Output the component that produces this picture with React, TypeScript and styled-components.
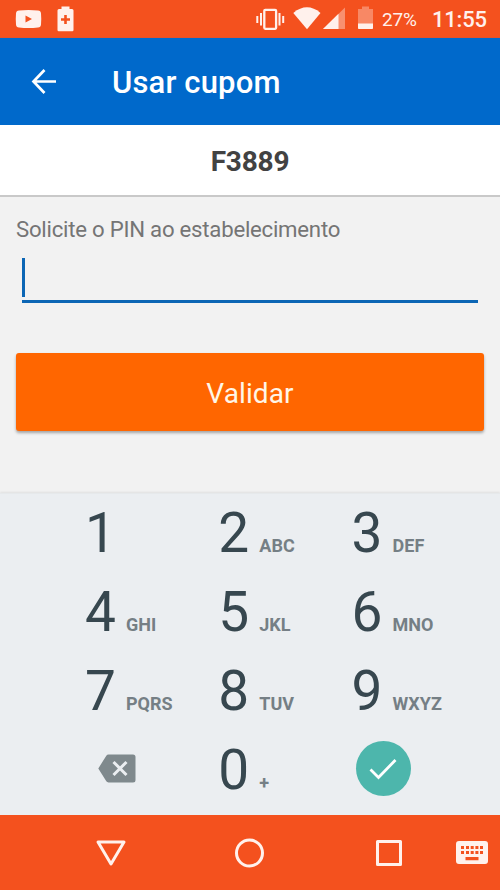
import React from "react";
import styled, { createGlobalStyle } from "styled-components";

const GlobalStyle = createGlobalStyle`
  *, *::before, *::after { box-sizing: border-box; }
  body { margin: 0; font-family: Roboto, "Liberation Sans", sans-serif; background: #f2f2f2; }
  button { border: 0; padding: 0; font: inherit; background: none; }
  svg { display: block; flex: none; }
`;

const Screen = styled.div`
  display: flex;
  flex-direction: column;
  width: 500px;
  height: 890px;
  overflow: hidden;
  background: #f2f2f2;
`;

const StatusBar = styled.header`
  display: flex;
  height: 38px;
  flex: none;
  background: #f4511e;
  border-bottom: 1px solid #e2532c;
`;

const StatusText = styled.span<{ $size: number; $weight: number; $width: number; $gap: number }>`
  width: ${(p) => p.$width}px;
  margin-left: ${(p) => p.$gap}px;
  font-size: ${(p) => p.$size}px;
  font-weight: ${(p) => p.$weight};
  line-height: 40px;
  letter-spacing: -0.2px;
  white-space: nowrap;
  color: #fff1ec;
`;

const AppBar = styled.div`
  display: flex;
  align-items: center;
  height: 87px;
  flex: none;
  padding-left: 31px;
  background: #0069cb;
`;

const BackButton = styled.button`
  width: 81px;
`;

const Title = styled.h1`
  margin: 2px 0 0;
  font-size: 31px;
  font-weight: 500;
  line-height: 40px;
  letter-spacing: 0.15px;
  color: #fff;
`;

const CouponCode = styled.div`
  height: 72px;
  flex: none;
  background: #fff;
  border-bottom: 2px solid #c9c9c9;
  color: #424242;
  font-size: 28px;
  font-weight: 700;
  line-height: 73px;
  letter-spacing: -0.2px;
  text-align: center;
`;

const Form = styled.main`
  display: flex;
  flex-direction: column;
  height: 296px;
  flex: none;
  padding: 17px 16px 0;
`;

const Label = styled.label`
  font-size: 22.2px;
  line-height: 30px;
  letter-spacing: -0.24px;
  color: #757575;
  white-space: nowrap;
`;

const PinField = styled.div`
  height: 45px;
  margin: 14px 6px 0;
  border-bottom: 3px solid #0c66b5;
`;

const Caret = styled.div`
  width: 3px;
  height: 39px;
  background: #0c66b5;
`;

const SubmitButton = styled.button`
  height: 78px;
  margin-top: 50px;
  padding-top: 3px;
  border-radius: 3px;
  background: #ff6600;
  color: #fff6e8;
  font-size: 28px;
  letter-spacing: 0.1px;
  box-shadow: 0 2px 3px rgba(0, 0, 0, 0.32);
`;

const Keypad = styled.section`
  display: grid;
  grid-template-columns: repeat(3, 133.3px);
  grid-template-rows: repeat(4, 79.1px);
  height: 322px;
  flex: none;
  padding-left: 85px;
  background: #ebeef1;
  border-top: 1px solid #e6e9eb;
  box-shadow: 0 -1px 2px rgba(0, 0, 0, 0.08);
`;

const Key = styled.button`
  display: flex;
  align-items: baseline;
  text-align: left;
  line-height: 79px;
`;

const IconKey = styled.button<{ $inset: number }>`
  display: flex;
  align-items: center;
  padding-left: ${(p) => p.$inset}px;
  padding-bottom: 4px;
`;

const Digit = styled.span`
  width: 41px;
  font-size: 55px;
  color: #37474f;
`;

const Letters = styled.span`
  font-size: 18px;
  font-weight: 700;
  color: #757f85;
`;

const Confirm = styled.span`
  display: grid;
  place-items: center;
  width: 55px;
  height: 55px;
  border-radius: 50%;
  background: #4db6ac;
`;

const NavBar = styled.nav`
  height: 75px;
  flex: none;
  background: #f4511e;
`;

const StatusIcons = () => (
  <svg width="375" height="37" viewBox="0 0 375 37" fill="#fff1ec">
    <path
      fillRule="evenodd"
      d="M19 10.400q9.500-1 19 0q2.800.2 3 3q.5 5.500 0 11q-.2 2.800-3 3q-9.500 1-19 0q-2.800-.2-3-3q-.5-5.500 0-11q.2-2.800 3-3zM25.500 15.500v7l6.500-3.500z"
    />
    <path
      fillRule="evenodd"
      d="M61.500 6.500h8v2.500h2.500a1.500 1.500 0 0 1 1.500 1.500v19.500a1.200 1.200 0 0 1-1.200 1.200H58.700a1.200 1.200 0 0 1-1.200-1.200V10.500a1.500 1.500 0 0 1 1.500-1.500h2.500zM64.200 15v3.200H61v2.600h3.200V24h2.600v-3.200H70v-2.600h-3.200V15z"
    />
    <rect x="264.300" y="9.800" width="11.800" height="19" rx="1" fill="none" stroke="#fff1ec" strokeWidth="2.300" />
    <path d="M260 13h2v12.500h-2zM256.300 16h2v7h-2zM278.500 13h2v12.500h-2zM282.200 16h2v7h-2z" />
    <path d="M293.300 12.900Q307 1.800 320.500 12.900L307 29.300z" />
    <path d="M345 7.500V29h-22z" opacity=".4" />
    <path d="M338.500 13.800V29H323z" />
    <path d="M362 6.500h7v2.500h4V29h-15V9h4z" opacity=".35" />
    <path d="M358 23.500h15V28a1 1 0 0 1-1 1h-13a1 1 0 0 1-1-1z" />
  </svg>
);

const keys = [
  ["1", ""],
  ["2", "ABC"],
  ["3", "DEF"],
  ["4", "GHI"],
  ["5", "JKL"],
  ["6", "MNO"],
  ["7", "PQRS"],
  ["8", "TUV"],
  ["9", "WXYZ"],
];

const NumberKey = ({ digit, letters }: { digit: string; letters: string }) => (
  <Key>
    <Digit>{digit}</Digit>
    <Letters>{letters}</Letters>
  </Key>
);

export default function App() {
  return (
    <>
      <GlobalStyle />
      <Screen>
        <StatusBar>
          <StatusIcons />
          <StatusText $size={19} $weight={400} $width={43} $gap={7}>27%</StatusText>
          <StatusText $size={22} $weight={500} $width={60} $gap={7}>11:55</StatusText>
        </StatusBar>
        <AppBar>
          <BackButton aria-label="Voltar">
            <svg width="26" height="26" viewBox="0 0 26 26" fill="none" stroke="#fff" strokeWidth="2.700">
              <path d="M25 12.500H3M13.500 1L2.500 12.500L13.500 24" />
            </svg>
          </BackButton>
          <Title>Usar cupom</Title>
        </AppBar>
        <CouponCode>F3889</CouponCode>
        <Form>
          <Label>Solicite o PIN ao estabelecimento</Label>
          <PinField>
            <Caret />
          </PinField>
          <SubmitButton>Validar</SubmitButton>
        </Form>
        <Keypad>
          {keys.map(([digit, letters]) => (
            <NumberKey key={digit} digit={digit} letters={letters} />
          ))}
          <IconKey $inset={13} aria-label="Apagar">
            <svg width="38" height="29" viewBox="0 0 38 29">
              <path d="M10.500.5H35a2.500 2.500 0 0 1 2.500 2.500v23a2.500 2.500 0 0 1-2.500 2.500H10.500a3 3 0 0 1-2.200-1.200L.3 14.500L8.300 1.700A3 3 0 0 1 10.500.5z" fill="#7f898d" />
              <path d="M15.500 8l13 13M28.500 8l-13 13" stroke="#ebeef1" strokeWidth="3" />
            </svg>
          </IconKey>
          <NumberKey digit="0" letters="+" />
          <IconKey $inset={4} aria-label="Confirmar">
            <Confirm>
              <svg width="28" height="22" viewBox="0 0 28 22" fill="none" stroke="#fff" strokeWidth="2.800">
                <path d="M1.500 11.500L9.500 19.500L26.500 2" />
              </svg>
            </Confirm>
          </IconKey>
        </Keypad>
        <NavBar>
          <svg width="500" height="75" viewBox="0 0 500 75" fill="none" stroke="#fff1ec" strokeWidth="3" strokeLinejoin="round">
            <path d="M98 27h26L111 49z" />
            <circle cx="249.500" cy="38" r="13" />
            <rect x="377.500" y="26.500" width="23" height="23" />
            <path
              stroke="none"
              fill="#fff1ec"
              fillRule="evenodd"
              d="M459 26h26a3 3 0 0 1 3 3v17a3 3 0 0 1-3 3h-26a3 3 0 0 1-3-3V29a3 3 0 0 1 3-3zM461 31v3h3v-3zM466 31v3h3v-3zM470.700 31v3h3v-3zM475.400 31v3h3v-3zM480 31v3h3v-3zM461 36v3h3v-3zM466 36v3h3v-3zM470.700 36v3h3v-3zM475.400 36v3h3v-3zM480 36v3h3v-3zM465.500 42v3.200h13V42z"
            />
          </svg>
        </NavBar>
      </Screen>
    </>
  );
}
